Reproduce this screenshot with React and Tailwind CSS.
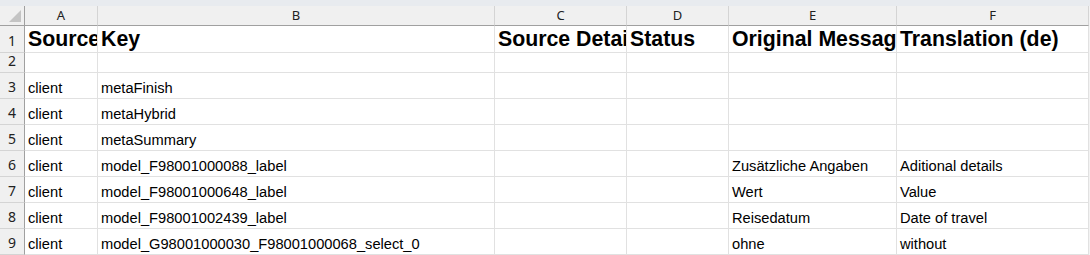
import React from "react";

const cols = ["A", "B", "C", "D", "E", "F"];
const headers = ["Source", "Key", "Source Details", "Status", "Original Message", "Translation (de)"];
const rows = [
  ["client", "metaFinish", "", "", "", ""],
  ["client", "metaHybrid", "", "", "", ""],
  ["client", "metaSummary", "", "", "", ""],
  ["client", "model_F98001000088_label", "", "", "Zusätzliche Angaben", "Aditional details"],
  ["client", "model_F98001000648_label", "", "", "Wert", "Value"],
  ["client", "model_F98001002439_label", "", "", "Reisedatum", "Date of travel"],
  ["client", "model_G98001000030_F98001000068_select_0", "", "", "ohne", "without"],
];

const ui = { fontFamily: '"Noto Sans", "Open Sans", sans-serif' };
const body = { fontFamily: '"Liberation Sans", Arial, sans-serif' };

function RowNum({ n, h }) {
  return (
    <div
      className={`flex items-end justify-center bg-[#f0f0f0] border-r border-r-[#a0a0a0] border-b border-b-[#d4d4d4] text-[14px] text-[#222] leading-[18px] ${h}`}
      style={ui}
    >
      <span className="pb-[2px]">{n}</span>
    </div>
  );
}

function Cell({ children, h, bold }) {
  return (
    <div
      className={`flex items-end overflow-hidden whitespace-nowrap border-r border-b border-[#e1e1e1] bg-white pl-[3px] text-black ${h} ${
        bold ? "text-[21.3px] font-bold leading-[24px]" : "text-[14.67px] leading-[17px]"
      }`}
      style={body}
    >
      <span className={bold ? "pb-[1px]" : "pb-[1px]"}>{children}</span>
    </div>
  );
}

export default function App() {
  return (
    <div className="w-[1090px] h-[255px] overflow-hidden bg-[#f3f3f3]">
      <div className="h-[6px] bg-[#e8ebef]" />
      <div className="grid grid-cols-[25px_73px_397px_132px_102px_168px_192px] w-[1089px]">
        {/* column header row */}
        <div className="relative h-[20px] bg-[#f0f0f0] border-r border-b border-[#a0a0a0]">
          <svg className="absolute right-[3px] bottom-[3px]" width="12" height="12" viewBox="0 0 12 12">
            <polygon points="12,0 12,12 0,12" fill="#c4c4c4" />
          </svg>
        </div>
        {cols.map((c) => (
          <div
            key={c}
            className="flex h-[20px] items-center justify-center bg-[#f0f0f0] border-r border-r-[#d4d4d4] border-b border-b-[#a0a0a0] text-[13px] text-[#222]"
            style={ui}
          >
            {c}
          </div>
        ))}

        {/* row 1 */}
        <RowNum n={1} h="h-[27px]" />
        {headers.map((t, i) => (
          <Cell key={i} h="h-[27px]" bold>
            {t}
          </Cell>
        ))}

        {/* row 2 */}
        <RowNum n={2} h="h-[20px]" />
        {cols.map((c) => (
          <Cell key={c} h="h-[20px]" />
        ))}

        {rows.map((r, ri) => (
          <React.Fragment key={ri}>
            <RowNum n={ri + 3} h="h-[26px]" />
            {r.map((t, ci) => (
              <Cell key={ci} h="h-[26px]">
                {t}
              </Cell>
            ))}
          </React.Fragment>
        ))}
      </div>
    </div>
  );
}
